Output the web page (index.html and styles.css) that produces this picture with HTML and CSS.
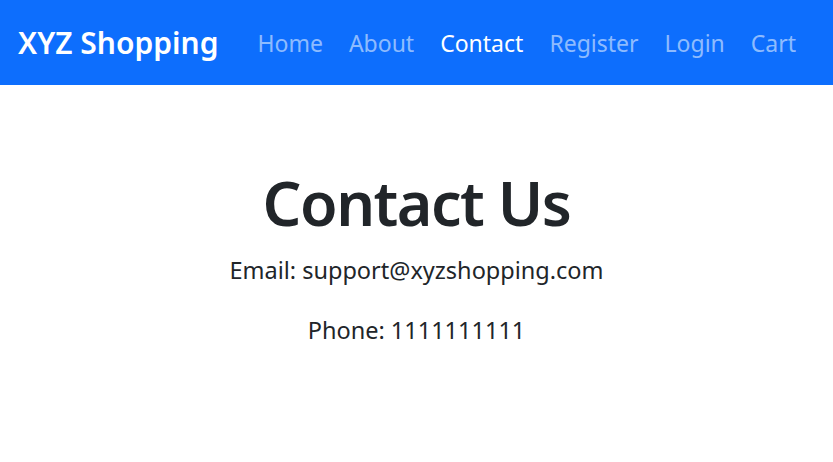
FILE: index.html
```html
<!DOCTYPE html>
<html lang="en">
<head>
<meta charset="utf-8">
<title>Contact Us - XYZ Shopping</title>
<link rel="stylesheet" href="styles.css">
</head>
<body>
<nav class="navbar">
  <a class="brand" href="#">XYZ Shopping</a>
  <ul class="nav-links">
    <li><a href="#">Home</a></li>
    <li><a href="#">About</a></li>
    <li><a class="active" href="#">Contact</a></li>
    <li><a href="#">Register</a></li>
    <li><a href="#">Login</a></li>
    <li><a href="#">Cart</a></li>
  </ul>
</nav>
<main class="content">
  <h1 class="title">Contact Us</h1>
  <p class="info">Email: support@xyzshopping.com</p>
  <p class="info">Phone: 1111111111</p>
</main>
</body>
</html>
```
FILE: styles.css
```css
* { box-sizing: border-box; }
html, body { margin: 0; padding: 0; }
body {
  font-family: "Noto Sans", "Open Sans", sans-serif;
  color: #212529;
  background: #fff;
}
.navbar {
  height: 85px;
  background: #0d6efd;
  display: flex;
  align-items: center;
  padding: 0 18px;
}
.brand {
  color: #fff;
  text-decoration: none;
  font-size: 30px;
  font-weight: 600;
  margin-right: 39px;
}
.nav-links {
  list-style: none;
  margin: 0;
  padding: 0;
  display: flex;
  gap: 26px;
}
.nav-links a {
  color: rgba(255,255,255,0.55);
  text-decoration: none;
  font-size: 23px;
}
.nav-links a.active { color: #fff; }
.content {
  text-align: center;
  padding-top: 81px;
}
.title {
  font-size: 61px;
  font-weight: 600;
  letter-spacing: -1.5px;
  margin: 0 0 14px;
  line-height: 1.2;
}
.info {
  font-size: 23.5px;
  margin: 0 0 25px;
  line-height: 1.5;
}
```
